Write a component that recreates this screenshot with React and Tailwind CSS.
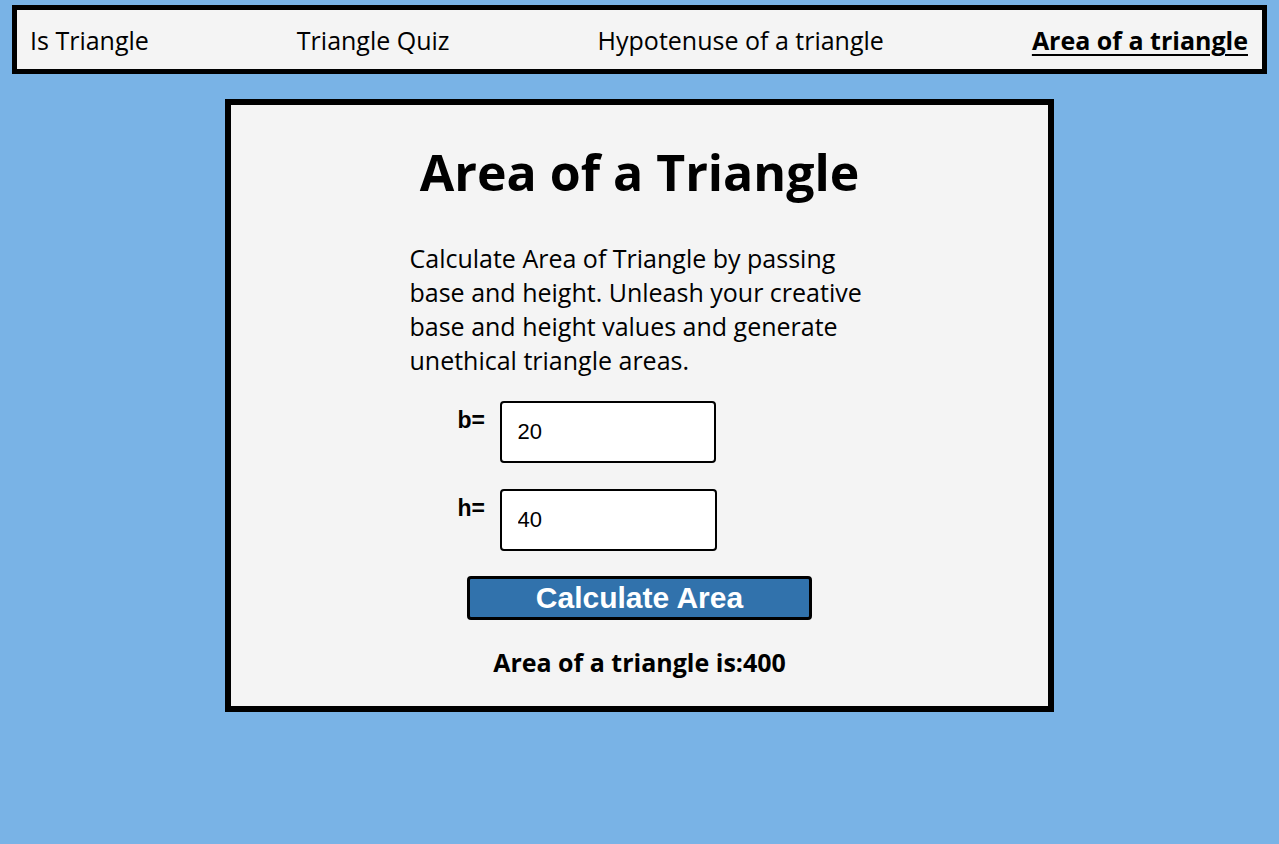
import React, { useState } from 'react';

const navLinks = ['Is Triangle', 'Triangle Quiz', 'Hypotenuse of a triangle', 'Area of a triangle'];

export default function App() {
  const [base, setBase] = useState('20');
  const [height, setHeight] = useState('40');
  const [area, setArea] = useState(400);

  const calculate = () => setArea((Number(base) * Number(height)) / 2 * 2);

  return (
    <div className="min-h-[844px] bg-[#79b3e6] pt-[5px] font-['Open_Sans',sans-serif] text-black">
      {/* Top nav */}
      <nav className="mx-[12px] flex h-[69px] items-center justify-between border-[5px] border-black bg-[#f4f4f4] pl-[13px] pr-[14px] pt-[2px]">
        {navLinks.map((link, i) => (
          <a
            key={link}
            href="#"
            className={`text-[25px] leading-none ${i === navLinks.length - 1 ? 'font-bold underline underline-offset-[4px] decoration-[2px]' : ''}`}
          >
            {link}
          </a>
        ))}
      </nav>

      {/* Card */}
      <div className="mx-auto mt-[25px] w-[829px] border-[6px] border-black bg-[#f4f4f4] pb-[29px] pt-[38px]">
        <h1 className="text-center text-[50px] font-bold leading-[58px]">Area of a Triangle</h1>

        <div className="mx-auto mt-[40px] w-[460px]">
          <p className="text-[25px] leading-[34px]">
            Calculate Area of Triangle by passing base and height. Unleash your creative base and height values and generate unethical triangle areas.
          </p>

          <div className="mt-[24px] flex flex-col gap-[26px] pl-[48px]">
            <div className="flex items-start gap-[13px]">
              <label className="mt-[2px] w-[29px] font-['Liberation_Sans',Arial,sans-serif] text-[23px] font-bold">b=</label>
              <input
                value={base}
                onChange={(e) => setBase(e.target.value)}
                className="h-[62px] w-[216px] rounded-[4px] border-2 border-black bg-white px-[16px] font-['Liberation_Sans',Arial,sans-serif] text-[22px] outline-none"
              />
            </div>
            <div className="flex items-start gap-[13px]">
              <label className="mt-[2px] w-[29px] font-['Liberation_Sans',Arial,sans-serif] text-[23px] font-bold">h=</label>
              <input
                value={height}
                onChange={(e) => setHeight(e.target.value)}
                className="h-[62px] w-[217px] rounded-[4px] border-2 border-black bg-white px-[16px] font-['Liberation_Sans',Arial,sans-serif] text-[22px] outline-none"
              />
            </div>
          </div>
        </div>

        <div className="mt-[25px] flex justify-center">
          <button
            onClick={calculate}
            className="h-[44px] w-[345px] rounded-[4px] border-[3px] border-black bg-[#3172ac] font-['Liberation_Sans',Arial,sans-serif] text-[30px] font-bold leading-none text-white"
          >
            Calculate Area
          </button>
        </div>

        <p className="mt-[27px] text-center text-[25px] font-bold leading-[30px]">Area of a triangle is:{area}</p>
      </div>
    </div>
  );
}
